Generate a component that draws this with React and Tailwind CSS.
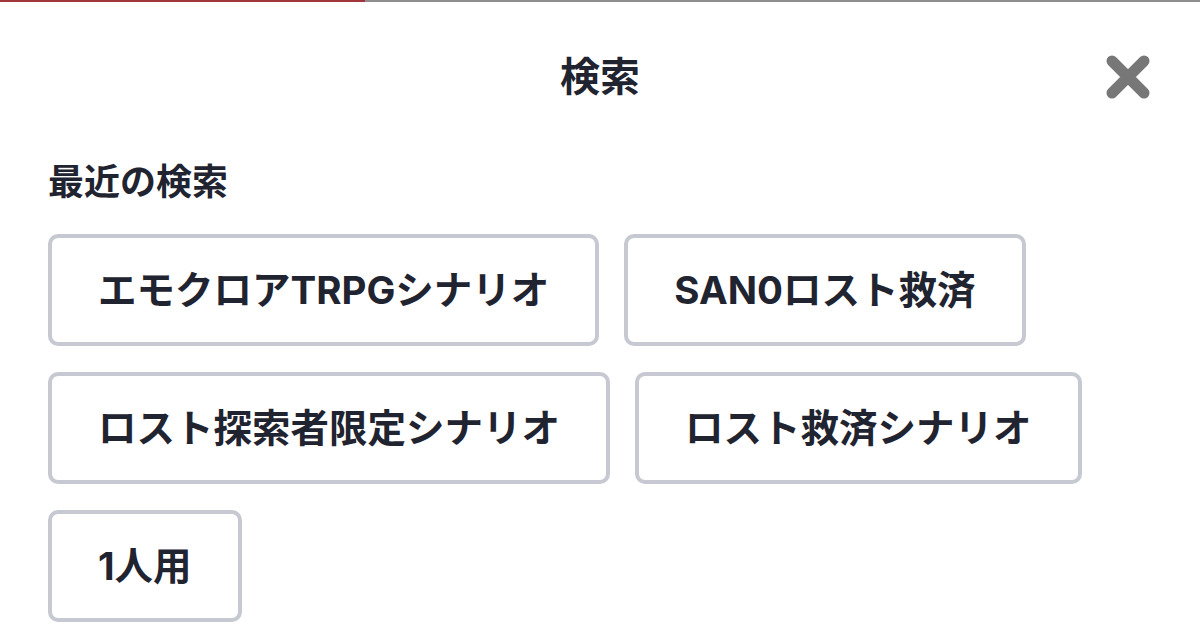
import React from 'react';

const recent = [
  'エモクロアTRPGシナリオ',
  'SAN0ロスト救済',
  'ロスト探索者限定シナリオ',
  'ロスト救済シナリオ',
  '1人用',
];

const App = () => {
  return (
    <div
      className="w-[1200px] h-[638px] bg-white overflow-hidden text-[#1f2430]"
      style={{ fontFamily: 'Inter, "Noto Sans CJK JP", sans-serif' }}
    >
      {/* loading bar */}
      <div className="flex items-start h-[3px]">
        <div className="w-[365px] h-[2px] bg-[#a3363c]" />
        <div className="flex-1 h-[2px] bg-[#8e8e8e]" />
      </div>

      <div className="grid grid-cols-[1fr_auto_1fr] items-center h-[147px]">
        <div />
        <h1 className="text-[40px] font-bold leading-none">検索</h1>
        <button className="justify-self-end mr-[49px] text-[#777777]">
          <svg width="46" height="46" viewBox="0 0 46 46">
            <path d="M7 7 L39 39 M39 7 L7 39" stroke="currentColor" strokeWidth="11" strokeLinecap="round" fill="none" />
          </svg>
        </button>
      </div>

      <div className="px-[48px]">
        <h2 className="mt-[13px] text-[36px] font-bold leading-[38px]">最近の検索</h2>
        <div className="mt-[33px] flex flex-wrap gap-x-[25px] gap-y-[26px]">
          {recent.map((q) => (
            <button
              key={q}
              className="h-[112px] px-[46px] flex items-center border-4 border-[#c6c9d1] rounded-[10px] bg-white text-[38.5px] font-bold leading-none"
            >
              {q}
            </button>
          ))}
        </div>
      </div>
    </div>
  );
};

export default App;
